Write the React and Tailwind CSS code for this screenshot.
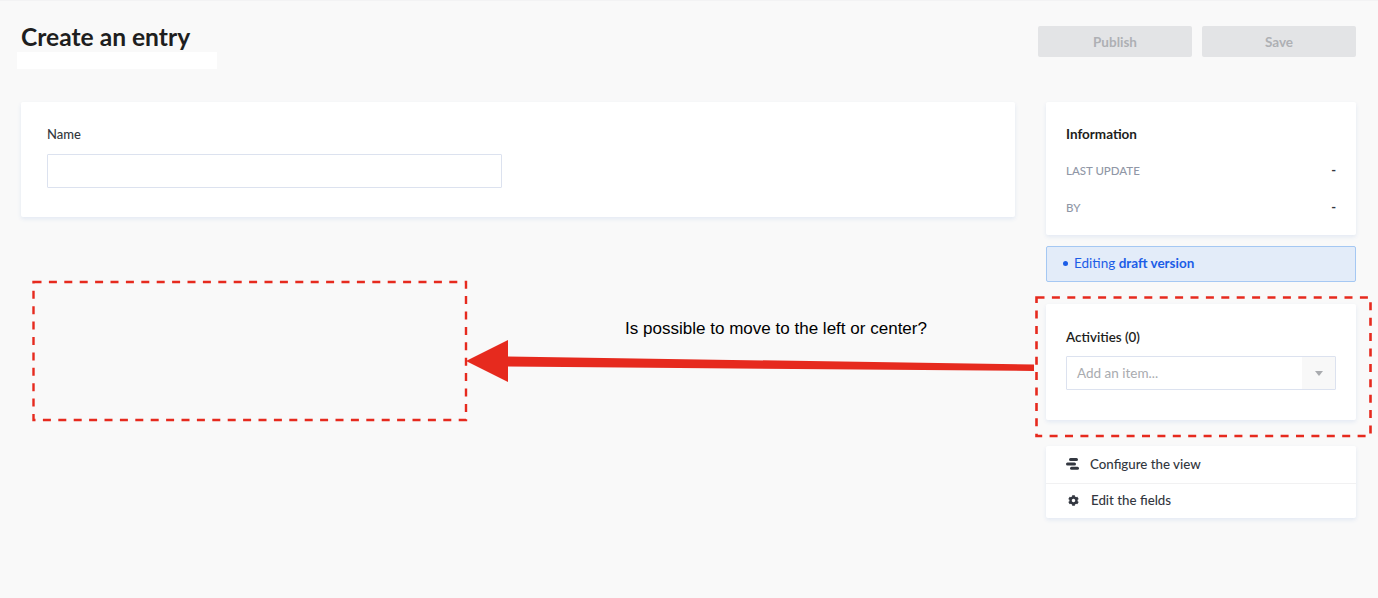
import React from "react";
import { FaCog } from "react-icons/fa";

function Card({ className = "", children }) {
  return (
    <div className={"bg-white rounded-[2px] shadow-[0_2px_4px_#e3e9f3] " + className}>{children}</div>
  );
}

function InfoRow({ label, className = "" }) {
  return (
    <div className={"flex justify-between items-center h-[20px] " + className}>
      <span className="text-[11.5px] font-medium text-[#9097a6] uppercase">{label}</span>
      <span className="text-[13px] font-bold text-[#333740]">-</span>
    </div>
  );
}

export default function App() {
  return (
    <div className="relative w-full h-[598px] overflow-hidden bg-[#f9f9f9] border-t border-t-[#f3f3f4] font-['Lato','Liberation_Sans',sans-serif] text-[#333740]">
      <header className="flex justify-between pl-[21px] pr-[22px] pt-[25px] h-[101px]">
        <h1 className="text-[24.6px] leading-[24px] font-bold text-[#1e1e20] mt-[-1px] h-[24px]">Create an entry</h1>
        <div className="flex gap-[10px]">
          <button className="w-[154px] h-[31px] pt-[2px] rounded-[2px] bg-[#e3e4e6] text-[13.5px] font-bold text-[#aeb0b4]">Publish</button>
          <button className="w-[154px] h-[31px] pt-[2px] rounded-[2px] bg-[#e3e4e6] text-[13.5px] font-bold text-[#aeb0b4]">Save</button>
        </div>
      </header>

      <main className="flex gap-[31px] pl-[21px] pr-[22px]">
        <div className="w-[994px]">
          <Card className="h-[115px] pt-[23px] pl-[26px]">
            <label className="block text-[13px] leading-[18px] font-medium text-[#333740]">Name</label>
            <input className="block mt-[11px] w-[455px] h-[34px] bg-white border border-[#dce2ef] rounded-[1px]" />
          </Card>
        </div>

        <aside className="w-[310px]">
          <Card className="h-[133px] pt-[23px] px-[20px]">
            <h2 className="text-[13.5px] leading-[18px] font-bold text-[#1e1e20]">Information</h2>
            <InfoRow label="Last update" className="mt-[18px]" />
            <InfoRow label="By" className="mt-[17px]" />
          </Card>

          <div className="mt-[11px] h-[36px] pb-[2px] flex items-center pl-[16px] bg-[#e3ecf9] border border-[#a5c8f3] rounded-[2px] text-[13.5px] text-[#1c5de7]">
            <span className="w-[5px] h-[5px] rounded-full bg-[#1c5de7] mr-[6px]" />
            <span>Editing <b className="font-bold">draft version</b></span>
          </div>

          <Card className="mt-[22px] h-[116px] pt-[24px] px-[20px]">
            <h2 className="text-[13.4px] leading-[18px] font-semibold text-[#1e1e20]">Activities (0)</h2>
            <div className="mt-[10px] h-[34px] flex border border-[#dce2ef] rounded-[1px]">
              <div className="flex-1 pl-[10px] pt-[1px] flex items-center text-[13.5px] text-[#a9abaf]">Add an item...</div>
              <div className="w-[33px] bg-[#f8f8f8] flex items-center justify-center">
                <svg width="8" height="5" viewBox="0 0 8 5"><path d="M0 0h8L4 5z" fill="#a9abaf" /></svg>
              </div>
            </div>
          </Card>

          <Card className="mt-[26px] h-[72px] px-[20px] flex flex-col">
            <div className="h-[37px] flex items-center text-[13.3px] font-medium">
              <svg width="13" height="12" viewBox="0 0 13 12" className="mr-[11px] mb-[2px]">
                <rect x="3" y="0" width="9" height="3" rx="1.5" fill="#333740" />
                <rect x="0" y="4.4" width="10" height="3" rx="1.5" fill="#333740" />
                <rect x="4" y="8.8" width="9" height="3" rx="1.5" fill="#333740" />
              </svg>
              <span>Configure the view</span>
            </div>
            <div className="-mx-[20px] h-px bg-[#f1f1f2]" />
            <div className="h-[34px] flex items-center text-[13.3px] font-medium">
              <FaCog className="w-[11px] h-[11px] ml-[2px] mr-[12px] mb-[1px] text-[#333740]" />
              <span>Edit the fields</span>
            </div>
          </Card>
        </aside>
      </main>

      {/* redaction strip */}
      <div className="absolute left-[17px] top-[51px] w-[200px] h-[17px] bg-white" />

      {/* annotation overlay */}
      <svg className="absolute left-0 top-[-1px]" width="1378" height="598" viewBox="0 0 1378 598" fill="none">
        <rect x="33.5" y="282" width="432.5" height="138" stroke="#e62a1e" strokeWidth="2.4" strokeDasharray="8 7.4" />
        <rect x="1036.5" y="297.5" width="334" height="138.5" stroke="#e62a1e" strokeWidth="2.6" strokeDasharray="8 7.4" />
        <path d="M466 361L508 340V356.5L1034 364.5V371L508 366.5V382Z" fill="#e62a1e" />
      </svg>
      <div className="absolute left-[625px] top-[318px] text-[17.05px] leading-[20px] text-black font-['Liberation_Sans',sans-serif]">
        Is possible to move to the left or center?
      </div>
    </div>
  );
}
